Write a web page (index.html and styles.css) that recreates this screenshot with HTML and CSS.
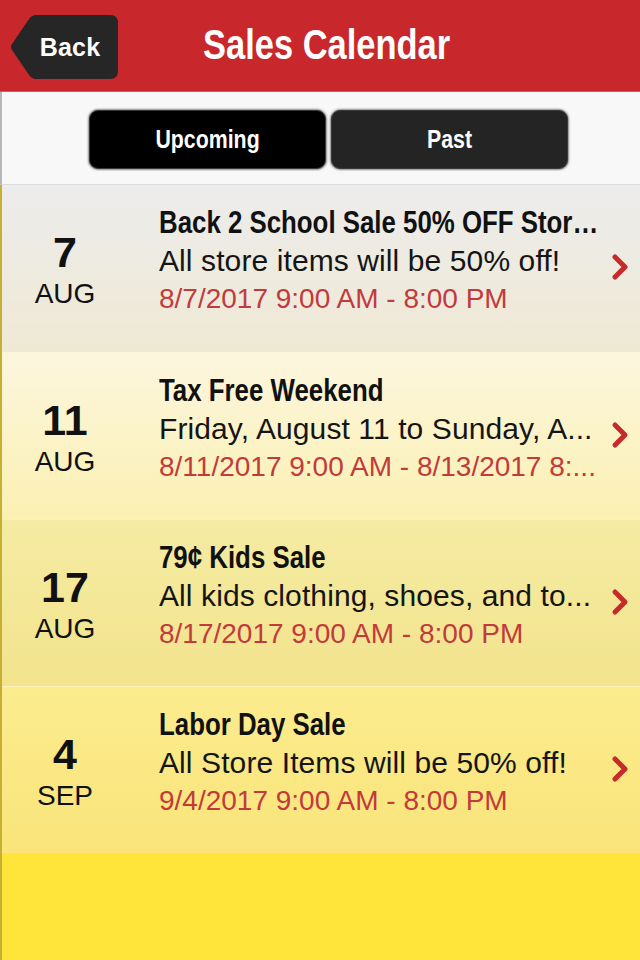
FILE: index.html
```html
<!DOCTYPE html>
<html lang="en">
<head>
<meta charset="utf-8">
<title>Sales Calendar</title>
<link rel="stylesheet" href="styles.css">
</head>
<body>
<div class="screen">
  <header class="topbar">
    <a class="back" href="#">
      <svg class="back-shape" viewBox="0 0 108 64" preserveAspectRatio="none" aria-hidden="true">
        <path d="M26 0 H100 Q108 0 108 8 V56 Q108 64 100 64 H26 Q22 64 19 60 L2 35 Q0 32 2 29 L19 4 Q22 0 26 0 Z" fill="#262626"/>
      </svg>
      <span class="back-label">Back</span>
    </a>
    <h1 class="title"><span class="narrow">Sales Calendar</span></h1>
  </header>

  <nav class="segbar">
    <div class="segments">
      <button class="seg seg-active"><span class="narrow">Upcoming</span></button>
      <button class="seg"><span class="narrow">Past</span></button>
    </div>
  </nav>

  <main class="list">
    <div class="row row-1">
      <div class="date"><span class="day">7</span><span class="mon">AUG</span></div>
      <div class="info">
        <div class="ev-title"><span class="narrow-left">Back 2 School Sale 50% OFF Stor…</span></div>
        <div class="ev-desc">All store items will be 50% off!</div>
        <div class="ev-time">8/7/2017 9:00 AM - 8:00 PM</div>
      </div>
      <svg class="chev" viewBox="0 0 18 28" aria-hidden="true"><polyline points="4,4 14,14 4,24" fill="none" stroke="#c62a2b" stroke-width="5" stroke-linecap="round" stroke-linejoin="round"/></svg>
    </div>
    <div class="row row-2">
      <div class="date"><span class="day">11</span><span class="mon">AUG</span></div>
      <div class="info">
        <div class="ev-title"><span class="narrow-left">Tax Free Weekend</span></div>
        <div class="ev-desc">Friday, August 11 to Sunday, A...</div>
        <div class="ev-time">8/11/2017 9:00 AM - 8/13/2017 8:...</div>
      </div>
      <svg class="chev" viewBox="0 0 18 28" aria-hidden="true"><polyline points="4,4 14,14 4,24" fill="none" stroke="#c62a2b" stroke-width="5" stroke-linecap="round" stroke-linejoin="round"/></svg>
    </div>
    <div class="row row-3">
      <div class="date"><span class="day">17</span><span class="mon">AUG</span></div>
      <div class="info">
        <div class="ev-title"><span class="narrow-left">79¢ Kids Sale</span></div>
        <div class="ev-desc">All kids clothing, shoes, and to...</div>
        <div class="ev-time">8/17/2017 9:00 AM - 8:00 PM</div>
      </div>
      <svg class="chev" viewBox="0 0 18 28" aria-hidden="true"><polyline points="4,4 14,14 4,24" fill="none" stroke="#c62a2b" stroke-width="5" stroke-linecap="round" stroke-linejoin="round"/></svg>
    </div>
    <div class="row row-4">
      <div class="date"><span class="day">4</span><span class="mon">SEP</span></div>
      <div class="info">
        <div class="ev-title"><span class="narrow-left">Labor Day Sale</span></div>
        <div class="ev-desc">All Store Items will be 50% off!</div>
        <div class="ev-time">9/4/2017 9:00 AM - 8:00 PM</div>
      </div>
      <svg class="chev" viewBox="0 0 18 28" aria-hidden="true"><polyline points="4,4 14,14 4,24" fill="none" stroke="#c62a2b" stroke-width="5" stroke-linecap="round" stroke-linejoin="round"/></svg>
    </div>
    <div class="filler"></div>
  </main>
</div>
</body>
</html>
```

FILE: styles.css
```css
* { box-sizing: border-box; }

html, body {
  margin: 0;
  padding: 0;
  width: 640px;
  height: 960px;
  overflow: hidden;
}

body {
  font-family: "Liberation Sans", Arial, sans-serif;
  background: #ffe43a;
}

.screen {
  width: 640px;
  height: 960px;
  display: flex;
  flex-direction: column;
  overflow: hidden;
}

/* condensed look: Liberation Sans Bold squeezed to Arial Narrow proportions */
.narrow,
.narrow-left {
  display: inline-block;
  font-family: "Liberation Sans", Arial, sans-serif;
  font-weight: bold;
  transform: scaleX(0.82);
  transform-origin: center;
}

.narrow-left {
  transform-origin: left center;
}

.topbar {
  position: relative;
  height: 92px;
  flex: none;
  background: #c8282b;
  border-bottom: 1px solid #d95a5c;
  display: flex;
  align-items: center;
  justify-content: center;
}

.back {
  position: absolute;
  left: 10px;
  top: 15px;
  width: 108px;
  height: 64px;
  display: flex;
  align-items: center;
  justify-content: center;
  padding-left: 12px;
  text-decoration: none;
}

.back-shape {
  position: absolute;
  inset: 0;
  width: 100%;
  height: 100%;
}

.back-label {
  position: relative;
  color: #fff;
  font-weight: bold;
  font-size: 25px;
  letter-spacing: 0.2px;
}

.title {
  margin: 0 0 2px 14px;
  color: #fff;
  font-size: 42px;
  line-height: 1;
  font-weight: bold;
}

.segbar {
  flex: none;
  height: 93px;
  background: #f8f8f8;
  border-bottom: 1px solid #dcdcdc;
  border-left: 2px solid #b8b8b8;
  display: flex;
  align-items: center;
  justify-content: center;
  padding-top: 2px;
}

.segments {
  display: flex;
  gap: 5px;
  margin-left: 15px;
}

.seg {
  width: 237px;
  height: 59px;
  border: 1px solid #3a3a3a;
  border-radius: 9px;
  background: #242424;
  box-shadow: 0 0 2px 1px rgba(0, 0, 0, 0.45);
  color: #fff;
  font-size: 26px;
  padding: 0;
}

.seg-active {
  background: #000;
}

.list {
  flex: 1;
  display: flex;
  flex-direction: column;
  border-left: 2px solid rgba(90, 80, 40, 0.35);
}

.row {
  height: 167px;
  flex: none;
  display: flex;
  align-items: flex-start;
  border-top: 1px solid rgba(255, 255, 255, 0.5);
}

.row-1 { background: linear-gradient(#ececec, #efe9d4); border-top: none; }
.row-2 { background: linear-gradient(#fcf6de, #fbf0b2); }
.row-3 { background: linear-gradient(#f5eba3, #f2e38c); }
.row-4 { background: linear-gradient(#fbec8e, #fae47a); }

.filler {
  flex: 1;
  background: #ffe43a;
}

.date {
  width: 126px;
  flex: none;
  align-self: center;
  display: flex;
  flex-direction: column;
  align-items: center;
  color: #111;
  margin-top: 2px;
}

.day {
  font-weight: bold;
  font-size: 43px;
  line-height: 44px;
}

.mon {
  font-size: 28px;
  line-height: 30px;
  margin-top: 5px;
}

.info {
  flex: 1;
  min-width: 0;
  margin-left: 31px;
  padding-top: 18px;
  white-space: nowrap;
  overflow: hidden;
}

.ev-title {
  font-size: 31.5px;
  line-height: 38px;
  color: #111;
}

.ev-desc {
  font-size: 30px;
  line-height: 40px;
  color: #151515;
  letter-spacing: 0.1px;
}

.ev-time {
  font-size: 28px;
  line-height: 36px;
  color: #c23a3c;
}

.chev {
  flex: none;
  width: 18px;
  height: 28px;
  margin: 68px 11px 0 4px;
}
```
